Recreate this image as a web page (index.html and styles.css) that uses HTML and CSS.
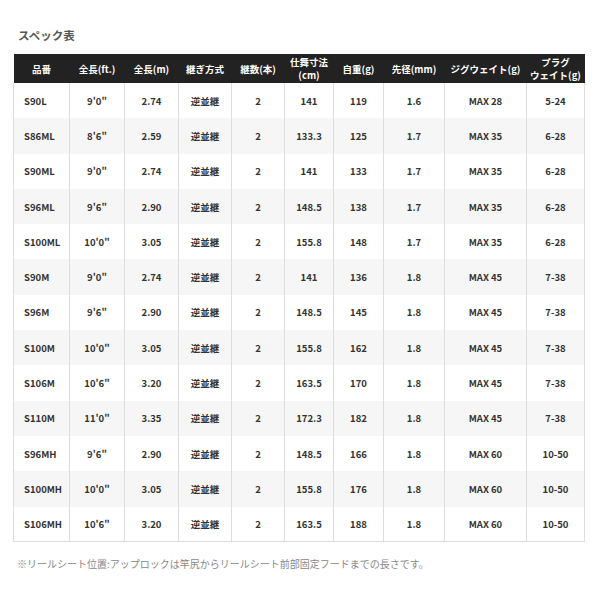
FILE: index.html
```html
<!DOCTYPE html>
<html lang="ja">
<head>
<meta charset="utf-8">
<link rel="stylesheet" href="styles.css">
</head>
<body>
<div class="page">
  <h2 class="title">スペック表</h2>
  <table class="spec">
    <colgroup>
      <col style="width:56px"><col style="width:55px"><col style="width:54px"><col style="width:53px"><col style="width:53px">
      <col style="width:49px"><col style="width:50px"><col style="width:61px"><col style="width:82px"><col style="width:58px">
    </colgroup>
    <thead>
      <tr>
        <th>品番</th><th>全長(ft.)</th><th>全長(m)</th><th>継ぎ方式</th><th>継数(本)</th>
        <th><span class="l">仕舞寸法</span><span class="l">(cm)</span></th><th>自重(g)</th><th>先径(mm)</th><th>ジグウェイト(g)</th><th><span class="l">プラグ</span><span class="l">ウェイト(g)</span></th>
      </tr>
    </thead>
    <tbody>
      <tr><td class="name">S90L</td><td>9'0"</td><td>2.74</td><td>逆並継</td><td>2</td><td>141</td><td>119</td><td>1.6</td><td>MAX 28</td><td>5-24</td></tr>
      <tr><td class="name">S86ML</td><td>8'6"</td><td>2.59</td><td>逆並継</td><td>2</td><td>133.3</td><td>125</td><td>1.7</td><td>MAX 35</td><td>6-28</td></tr>
      <tr><td class="name">S90ML</td><td>9'0"</td><td>2.74</td><td>逆並継</td><td>2</td><td>141</td><td>133</td><td>1.7</td><td>MAX 35</td><td>6-28</td></tr>
      <tr><td class="name">S96ML</td><td>9'6"</td><td>2.90</td><td>逆並継</td><td>2</td><td>148.5</td><td>138</td><td>1.7</td><td>MAX 35</td><td>6-28</td></tr>
      <tr><td class="name">S100ML</td><td>10'0"</td><td>3.05</td><td>逆並継</td><td>2</td><td>155.8</td><td>148</td><td>1.7</td><td>MAX 35</td><td>6-28</td></tr>
      <tr><td class="name">S90M</td><td>9'0"</td><td>2.74</td><td>逆並継</td><td>2</td><td>141</td><td>136</td><td>1.8</td><td>MAX 45</td><td>7-38</td></tr>
      <tr><td class="name">S96M</td><td>9'6"</td><td>2.90</td><td>逆並継</td><td>2</td><td>148.5</td><td>145</td><td>1.8</td><td>MAX 45</td><td>7-38</td></tr>
      <tr><td class="name">S100M</td><td>10'0"</td><td>3.05</td><td>逆並継</td><td>2</td><td>155.8</td><td>162</td><td>1.8</td><td>MAX 45</td><td>7-38</td></tr>
      <tr><td class="name">S106M</td><td>10'6"</td><td>3.20</td><td>逆並継</td><td>2</td><td>163.5</td><td>170</td><td>1.8</td><td>MAX 45</td><td>7-38</td></tr>
      <tr><td class="name">S110M</td><td>11'0"</td><td>3.35</td><td>逆並継</td><td>2</td><td>172.3</td><td>182</td><td>1.8</td><td>MAX 45</td><td>7-38</td></tr>
      <tr><td class="name">S96MH</td><td>9'6"</td><td>2.90</td><td>逆並継</td><td>2</td><td>148.5</td><td>166</td><td>1.8</td><td>MAX 60</td><td>10-50</td></tr>
      <tr><td class="name">S100MH</td><td>10'0"</td><td>3.05</td><td>逆並継</td><td>2</td><td>155.8</td><td>176</td><td>1.8</td><td>MAX 60</td><td>10-50</td></tr>
      <tr><td class="name">S106MH</td><td>10'6"</td><td>3.20</td><td>逆並継</td><td>2</td><td>163.5</td><td>188</td><td>1.8</td><td>MAX 60</td><td>10-50</td></tr>
    </tbody>
  </table>
  <p class="note">※リールシート位置:アップロックは竿尻からリールシート前部固定フードまでの長さです。</p>
</div>
</body>
</html>
```

FILE: styles.css
```css
* { box-sizing: border-box; }
html, body { margin: 0; padding: 0; background: #fff; }
body {
  font-family: "Noto Sans CJK JP", "Noto Sans", sans-serif;
  color: #333;
}
.page {
  padding: 28px 16px 0 13px;
}
.title {
  margin: 0 0 12px 5px;
  font-size: 11.5px;
  line-height: 14px;
  font-weight: 700;
  color: #555;
}
.spec {
  border-collapse: collapse;
  table-layout: fixed;
  width: 572px;
  font-size: 9.5px;
  font-weight: 700;
}
.spec th {
  background: #222;
  color: #fff;
  height: 29px;
  padding: 0;
  line-height: 12px;
  font-weight: 700;
  text-align: center;
  vertical-align: middle;
}
.spec th .l {
  display: block;
  line-height: 12.5px;
}
.spec td {
  height: 35.3px;
  padding: 0;
  text-align: center;
  vertical-align: middle;
  border-left: 1px solid #ddd;
  border-right: 1px solid #ddd;
  color: #333;
}
.spec td.name {
  text-align: left;
  padding-left: 10px;
}
.spec tbody tr:nth-child(even) td { background: #f6f6f6; }
.spec tbody tr:last-child td { border-bottom: 1px solid #ddd; }
.note {
  margin: 15px 0 0 4px;
  font-size: 10px;
  line-height: 14px;
  color: #888;
  font-weight: 400;
}
```
